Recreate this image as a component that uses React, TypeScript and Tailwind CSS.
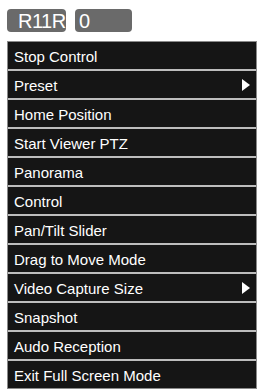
import React from "react";

const items: { label: string; sub?: boolean }[] = [
  { label: "Stop Control" },
  { label: "Preset", sub: true },
  { label: "Home Position" },
  { label: "Start Viewer PTZ" },
  { label: "Panorama" },
  { label: "Control" },
  { label: "Pan/Tilt Slider" },
  { label: "Drag to Move Mode" },
  { label: "Video Capture Size", sub: true },
  { label: "Snapshot" },
  { label: "Audo Reception" },
  { label: "Exit Full Screen Mode" },
];

export default function App() {
  return (
    <div
      className="w-[262px] h-[392px] bg-white overflow-hidden"
      style={{ fontFamily: '"Liberation Sans", Arial, sans-serif' }}
    >
      <div className="flex gap-[9px] pl-[7px] pt-[9px]">
        <div className="w-[59px] h-[23px] rounded-[4px] bg-[#6a6a6a] text-white text-[20px] leading-[23px] pl-[11px] pt-[1px] tracking-[-0.5px]">
          R11R
        </div>
        <div className="w-[57px] h-[23px] rounded-[4px] bg-[#6a6a6a] text-white text-[20px] leading-[23px] pl-[4px] pt-[1px]">
          0
        </div>
      </div>
      <div className="ml-[7px] mt-[9px] w-[250px] flex flex-col gap-[2px] bg-[#bdbdbd] border border-[#8a8a8a]">
        {items.map((it) => (
          <div
            key={it.label}
            className="h-[27px] bg-[#151515] flex items-center justify-between pl-[6px] pr-[6px] pt-[2px] text-white text-[15px]"
          >
            <span className="leading-[27px]">{it.label}</span>
            {it.sub && (
              <svg width="8" height="12" viewBox="0 0 8 12" className="mb-[2px]">
                <polygon points="0,0 8,6 0,12" fill="white" />
              </svg>
            )}
          </div>
        ))}
      </div>
    </div>
  );
}
